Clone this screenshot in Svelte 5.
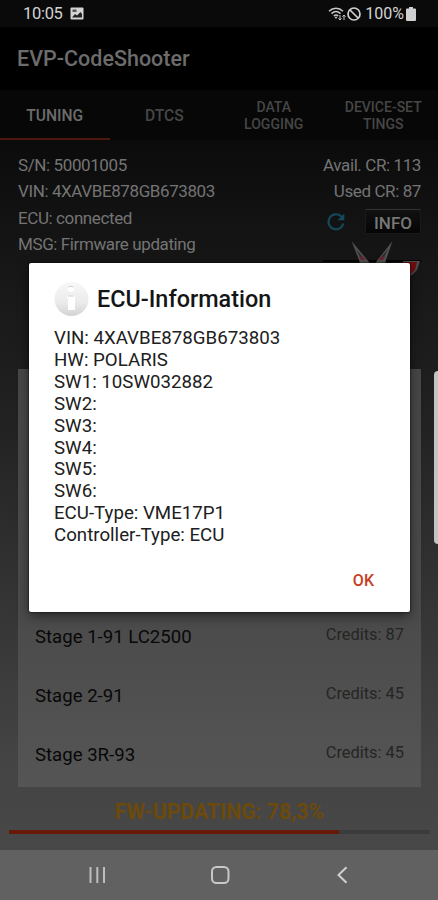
<script>
    const tabs = [
        { lines: ['TUNING'], active: true },
        { lines: ['DTCS'] },
        { lines: ['DATA', 'LOGGING'] },
        { lines: ['DEVICE-SET', 'TINGS'] }
    ];

    const stages = [
        { name: 'Stage 1-91 LC2500', credits: 87 },
        { name: 'Stage 2-91', credits: 45 },
        { name: 'Stage 3R-93', credits: 45 }
    ];

    const ecuInfo = [
        'VIN: 4XAVBE878GB673803',
        'HW: POLARIS',
        'SW1: 10SW032882',
        'SW2:',
        'SW3:',
        'SW4:',
        'SW5:',
        'SW6:',
        'ECU-Type: VME17P1',
        'Controller-Type: ECU'
    ];

    let progress = 78.3;
    let open = true;
</script>

<div class="screen">
    <div class="statusbar">
        <span class="clock">10:05</span>
        <svg class="picture" width="14" height="13" viewBox="0 0 14 13">
            <rect x="0.5" y="0.5" width="13" height="12" rx="1" fill="#d4d4d4" />
            <path d="M2 10.5 5 7l2 1.6L10.500 5 12 7v3.500z" fill="#222" />
            <path d="M2.500 2.500h4v2.500h-4z" fill="#555" />
        </svg>
        <div class="indicators">
            <svg width="18" height="14" viewBox="0 0 18 14" fill="none" stroke="#c8c8c8" stroke-width="1.500">
                <path d="M1 4.200C5 .3 11 .3 15 4.200M3.500 6.600c3-2.700 6-2.700 9 0M5.800 9c1.500-1.300 3-1.300 4.400 0" />
                <path d="M6.500 9.800 8 12l1.500-2.200z" fill="#c8c8c8" stroke="none" />
                <path d="M12 8v5M10.500 11.300 12 13l1.500-1.700M16 13V8M14.500 9.700 16 8l1.500 1.700" stroke-width="1" />
            </svg>
            <svg width="15" height="14" viewBox="0 0 15 14" fill="none" stroke="#d0d0d0" stroke-width="1.700">
                <circle cx="8" cy="7" r="6" />
                <path d="m4 3 8 8" />
            </svg>
            <span class="percent">100%</span>
            <svg width="10" height="14" viewBox="0 0 10 14">
                <path d="M3 0h4v1.500h2q1 0 1 1V13q0 1-1 1H1q-1 0-1-1V2.500q0-1 1-1h2z" fill="#d0d0d0" />
            </svg>
        </div>
    </div>

    <header>EVP-CodeShooter</header>

    <nav class="tabs">
        {#each tabs as tab}
            <div class="tab" class:active={tab.active} class:wrapped={tab.lines.length > 1}>
                {#each tab.lines as line}
                    <span>{line}</span>
                {/each}
            </div>
        {/each}
    </nav>

    <section class="device">
        <div class="left">
            <div>S/N: 50001005</div>
            <div>VIN: 4XAVBE878GB673803</div>
            <div>ECU: connected</div>
            <div>MSG: Firmware updating</div>
        </div>
        <div class="right">
            <div>Avail. CR: 113</div>
            <div>Used CR: 87</div>
            <div class="actions">
                <svg width="20" height="20" viewBox="0 0 20 20" fill="none" stroke="#16495c" stroke-width="2">
                    <path d="M15.800 5A7.500 7.500 0 1 0 17.300 11.500" />
                    <path d="M18.300 1.500v6.800h-6.800z" fill="#16495c" stroke="none" />
                </svg>
                <button>INFO</button>
            </div>
            <svg class="logo" width="98" height="36" viewBox="0 0 98 36">
                <path d="M0 21h98" stroke="#050505" stroke-width="2" />
                <path d="M28.500 1 46 22v6h-8l-2-8z" fill="#505050" />
                <path d="M69.500 1 53 22v6h8l2-8z" fill="#505050" />
                <path d="m33 9 9 11-4-1z" fill="#2a2a2a" />
                <path d="m65 9-9 11 4-1z" fill="#2a2a2a" />
                <path d="m36 16 4 1 2 3h-4z" fill="#6b2230" />
                <path d="m62 16-4 1-2 3h4z" fill="#6b2230" />
                <path d="M80 21h17l-3 9-5 5h-9z" fill="#4c4c4c" />
                <path d="M80 22h14l-2 8-4 4h-8z" fill="#700d0d" />
            </svg>
        </div>
    </section>

    <main class="card">
        {#each stages as stage}
            <div class="stage">
                <span>{stage.name}</span>
                <span class="credits">Credits: {stage.credits}</span>
            </div>
        {/each}
    </main>

    <div class="update">
        <div class="label">FW-UPDATING: {progress.toString().replace('.', ',')}%</div>
        <div class="track"><div class="fill" style="width: {progress}%"></div></div>
    </div>

    <footer>
        <svg width="18" height="18" viewBox="0 0 18 18" stroke="#bdbdbd" stroke-width="2">
            <path d="M2.500 1v16M9.300 1v16M16 1v16" />
        </svg>
        <svg width="20" height="18" viewBox="0 0 20 18" fill="none" stroke="#c8c8c8" stroke-width="2">
            <rect x="1" y="1" width="16.500" height="16" rx="4.500" />
        </svg>
        <svg width="12" height="18" viewBox="0 0 12 18" fill="none" stroke="#d0d0d0" stroke-width="2">
            <path d="m10.500 1.300-8 7.700 8 7.700" />
        </svg>
    </footer>

    <div class="edge"></div>

    {#if open}
        <div class="dialog">
            <div class="title">
                <svg width="36" height="36" viewBox="0 0 36 36">
                    <defs>
                        <linearGradient id="disc" x1="0" y1="0" x2="0" y2="1">
                            <stop offset="0" stop-color="#f8f8f8" />
                            <stop offset="0.600" stop-color="#ebebeb" />
                            <stop offset="1" stop-color="#d3d3d3" />
                        </linearGradient>
                    </defs>
                    <circle cx="17.500" cy="18" r="17" fill="url(#disc)" />
                    <circle cx="17" cy="8" r="3" fill="#fff" />
                    <path d="M13 14.500h8V29h-7V17h-1z" fill="#fff" />
                    <path d="M14.500 6q2.500-1.500 5 0M14 15h6" fill="none" stroke="#cfcfcf" />
                </svg>
                <h2>ECU-Information</h2>
            </div>
            <div class="message">
                {#each ecuInfo as line}
                    <div>{line}</div>
                {/each}
            </div>
            <button class="ok" on:click={() => (open = false)}>OK</button>
        </div>
    {/if}
</div>

<style>
    :global(body) {
        margin: 0;
        background: #000;
    }
    .screen {
        position: relative;
        display: flex;
        flex-direction: column;
        width: 438px;
        height: 900px;
        overflow: hidden;
        font-family: Roboto, "Liberation Sans", sans-serif;
        color: #747474;
        background: linear-gradient(#050505 90px, #0b0b0b 140px, #171717 270px, #202020 400px, #303030 560px, #434343 750px, #484848 850px);
    }
    button {
        font-family: inherit;
        border: 0;
        padding: 0;
    }
    .statusbar {
        display: flex;
        align-items: center;
        box-sizing: border-box;
        height: 27px;
        padding: 0 22px 0 23px;
        color: #d4d4d4;
        font-size: 16px;
        background: #0a0a0a;
    }
    .clock {
        font-size: 16.500px;
        letter-spacing: -0.3px;
    }
    .picture {
        margin-left: 7px;
    }
    .indicators {
        display: flex;
        align-items: center;
        margin-left: auto;
    }
    .percent {
        margin: 0 2px 0 4px;
    }
    header {
        height: 63px;
        padding-left: 17px;
        line-height: 63px;
        font-size: 21.500px;
        font-weight: 500;
        color: #6c6c6c;
        background: #000;
    }
    .tabs {
        display: flex;
        height: 50px;
        background: #070707;
    }
    .tab {
        display: flex;
        flex-direction: column;
        align-items: center;
        justify-content: center;
        box-sizing: border-box;
        width: 25%;
        padding-top: 5px;
        border-bottom: 2px solid transparent;
        font-size: 15.600px;
        font-weight: 500;
        line-height: 17px;
        color: #464646;
    }
    .tab.wrapped {
        padding-top: 4px;
        font-size: 14px;
    }
    .tab.active {
        color: #6c6c6c;
        border-color: #4c170c;
    }
    .device {
        display: flex;
        justify-content: space-between;
        height: 229px;
        padding: 12px 17px 0 18px;
        box-sizing: border-box;
        font-size: 17px;
        letter-spacing: -0.4px;
        line-height: 26.400px;
    }
    .right {
        display: flex;
        flex-direction: column;
        align-items: flex-end;
    }
    .actions {
        display: flex;
        align-items: center;
        gap: 19px;
        height: 34px;
    }
    .actions button {
        width: 56px;
        height: 25px;
        padding-top: 2px;
        border: 1px solid #191919;
        border-top-color: #333;
        font-size: 17px;
        font-weight: 500;
        color: #777;
        background: linear-gradient(#111, #050505);
    }
    .logo {
        margin-top: 1px;
    }
    .card {
        display: flex;
        flex-direction: column;
        justify-content: flex-end;
        box-sizing: border-box;
        height: 418px;
        margin: 0 17px 0 18px;
        padding-bottom: 3px;
        background: linear-gradient(#474747, #4b4b4b 60%, #555);
    }
    .stage {
        display: flex;
        align-items: center;
        justify-content: space-between;
        height: 59px;
        padding: 0 17px 0 17px;
        font-size: 18.600px;
        color: #080808;
    }
    .credits {
        margin-top: -4px;
        font-size: 16.400px;
        color: #252525;
    }
    .update {
        flex: 1;
        padding: 14px 8px 0 9px;
    }
    .label {
        height: 22px;
        margin-bottom: 7px;
        line-height: 22px;
        font-size: 21.200px;
        font-weight: 700;
        text-align: center;
        color: #6b4a0c;
    }
    .track {
        height: 4px;
        background: #3b3b3b;
    }
    .fill {
        height: 100%;
        background: #671a08;
    }
    footer {
        display: flex;
        align-items: center;
        justify-content: space-between;
        box-sizing: border-box;
        height: 50px;
        padding: 0 90px 0 88px;
        background: #616161;
    }
    .edge {
        position: absolute;
        top: 371px;
        right: 0;
        width: 4px;
        height: 173px;
        border-radius: 4px 0 0 4px;
        background: #c4c4c4;
    }
    .dialog {
        position: absolute;
        top: 263px;
        left: 29px;
        box-sizing: border-box;
        width: 381px;
        height: 349px;
        padding: 18px 26px 0 25px;
        border-radius: 2px;
        color: #202020;
        background: #fff;
        box-shadow: 0 4px 12px rgba(0, 0, 0, 0.5), 0 0 2px #000;
    }
    .title {
        display: flex;
        align-items: center;
        gap: 7px;
        height: 36px;
    }
    h2 {
        margin: 0;
        font-size: 23.400px;
        font-weight: 500;
        color: #151515;
    }
    .message {
        margin-top: 11px;
        font-size: 18.700px;
        line-height: 21.900px;
    }
    .ok {
        display: block;
        margin: 24px 10px 0 auto;
        font-size: 16px;
        line-height: 20px;
        font-weight: 500;
        color: #c6401f;
        background: none;
    }
</style>
